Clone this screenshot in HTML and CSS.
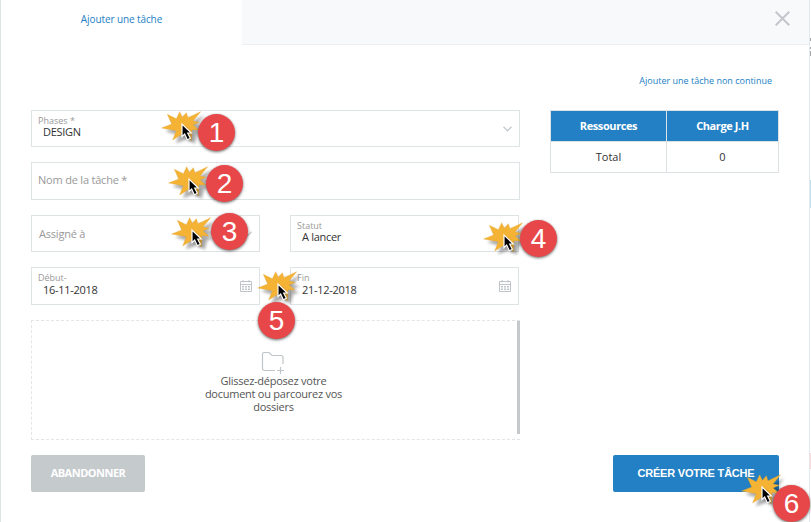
FILE: index.html
```
<!DOCTYPE html>
<html lang="fr">
<head>
<meta charset="utf-8">
<title>Ajouter une tâche</title>
<link rel="stylesheet" href="styles.css">
</head>
<body>
<svg class="defs" width="0" height="0" aria-hidden="true">
  <defs>
    <symbol id="click" viewBox="-66 -42 138 108">
      <path class="burst-shade" d="M-50 22L-22 10L-33 -16L-10 -4L3 -26L12 -8L23 -23L28 -7L66 -26L46 2L66 7L46 15L62 28L46 30L38 60L18 45L-18 58L-10 34Z"/>
      <path class="burst" d="M-61 12L-31 0L-44 -29L-17 -16L-7 -37L1 -20L13 -34L18 -19L56 -37L33 -9L52 -5L33 3L51 18L30 17L28 50L4 28L-28 48L-17 20Z"/>
      <path class="pointer-shade" d="M6 6V44L14 37L21 54L31 50L23 34H34Z"/>
      <path class="pointer" d="M0 0V38L8 30L16 47L25 43L17 27H28Z"/>
    </symbol>
    <symbol id="calendar" viewBox="0 0 12 12">
      <path d="M.5 1.500h11v10H.5zM.5 4.500h11M3 0v2.500M9 0v2.500"/>
      <path class="days" d="M2 6.500h8M2 8h8M2 9.500h8"/>
    </symbol>
  </defs>
</svg>

<main class="dialog">
  <header class="tabs">
    <div class="tab">Ajouter une tâche</div>
    <svg class="close" viewBox="0 0 15 15"><path d="M.7.7l13.6 13.6M14.3.7L.7 14.3"/></svg>
  </header>
  <div class="content">
    <form class="form">
      <div class="field select">
        <span class="label">Phases *</span><span class="value">DESIGN</span>
        <svg class="chevron" viewBox="0 0 9 6"><path d="M.5.8l4 4 4-4"/></svg>
      </div>
      <div class="field tall empty"><span class="placeholder">Nom de la tâche *</span></div>
      <div class="row">
        <div class="field empty">
          <span class="placeholder assigned">Assigné à</span>
          <svg class="chevron" viewBox="0 0 9 6"><path d="M.5.8l4 4 4-4"/></svg>
        </div>
        <div class="field"><span class="label">Statut</span><span class="value">A lancer</span></div>
      </div>
      <div class="row">
        <div class="field tall"><span class="label">Début-</span><span class="value">16-11-2018</span><svg class="cal"><use href="#calendar"/></svg></div>
        <div class="field tall"><span class="label">Fin</span><span class="value">21-12-2018</span><svg class="cal"><use href="#calendar"/></svg></div>
      </div>
      <div class="drop">
        <svg class="folder" viewBox="0 0 24 23"><path d="M14 19.500H3.500a2 2 0 0 1-2-2v-14q0-2 2-2h4.500l3 3h9q2 0 2 2V13M19.500 16v7M16 19.500h7"/></svg>
        <p>Glissez-déposez votre<br>document ou parcourez vos<br>dossiers</p>
      </div>
    </form>
    <aside class="side">
      <a class="extra">Ajouter une tâche non continue</a>
      <table>
        <tr><th class="first">Ressources</th><th>Charge J.H</th></tr>
        <tr><td>Total</td><td>0</td></tr>
      </table>
    </aside>
  </div>
  <footer class="actions">
    <button class="cancel">ABANDONNER</button>
    <button class="create">CRÉER VOTRE TÂCHE</button>
  </footer>
</main>
<div class="backdrop"></div>

<svg class="burst-mark m1"><use href="#click"/></svg><div class="badge b1">1</div>
<svg class="burst-mark m2"><use href="#click"/></svg><div class="badge b2">2</div>
<svg class="burst-mark m3"><use href="#click"/></svg><div class="badge b3">3</div>
<svg class="burst-mark m4"><use href="#click"/></svg><div class="badge b4">4</div>
<svg class="burst-mark m5"><use href="#click"/></svg><div class="badge b5">5</div>
<svg class="burst-mark m6"><use href="#click"/></svg><div class="badge b6">6</div>
</body>
</html>
```
FILE: styles.css
```
* { box-sizing: border-box; }
body {
  margin: 0;
  width: 811px;
  height: 522px;
  overflow: hidden;
  display: flex;
  position: relative;
  background: #fff;
  font-family: "Open Sans", sans-serif;
  color: #333;
}
.defs { position: absolute; }
.dialog {
  width: 810px;
  height: 522px;
  border-left: 1px solid #dfe5e7;
  border-right: 1px solid #e3e8ec;
}
.backdrop {
  width: 1px;
  background: linear-gradient(#fff 38px, #aaa 38px 41px, #fff 41px 47px, #aaa 47px 49px, #fff 49px 51px, #aaa 51px 56px, #fff 56px 180px, #bfe0ee 180px 208px, #fff 208px 453px, #fadada 453px 469px, #fff 469px);
}
.tabs {
  display: flex;
  justify-content: space-between;
  height: 45px;
  background: linear-gradient(#f8f9fb 44px, #eceff2 44px);
}
.tab {
  width: 241px;
  background: #fff;
  color: #2180c4;
  font-size: 10px;
  line-height: 39px;
  letter-spacing: -.1px;
  text-align: center;
}
.close {
  width: 15px;
  height: 15px;
  margin: 11px 19px 0 0;
  fill: none;
  stroke: #c3c7cb;
  stroke-width: 2;
}
.content {
  display: flex;
  gap: 30px;
  height: 395px;
  padding: 0 30px;
}
.form {
  display: flex;
  flex-direction: column;
  gap: 15px;
  width: 489px;
  padding-top: 65px;
}
.row { display: flex; gap: 30px; }
.row .field { width: 229px; }
.field {
  position: relative;
  display: flex;
  flex-direction: column;
  height: 37px;
  padding: 4px 6px 0;
  border: 1px solid #dee4e6;
}
.field.tall { height: 38px; }
.label { font-size: 9px; line-height: 11px; color: #999; }
.value { font-size: 11px; line-height: 12px; padding-left: 5px; letter-spacing: -.3px; }
.tall .value { padding-top: 1px; letter-spacing: -.3px; }
.field.empty { justify-content: center; padding-top: 0; }
.placeholder { font-size: 11px; line-height: 14px; padding-bottom: 2px; letter-spacing: -.2px; color: #999; }
.assigned { padding: 1px 0 0 1px; }
.chevron {
  position: absolute;
  right: 7px;
  top: 15px;
  width: 9px;
  height: 6px;
  fill: none;
  stroke: #c5c9cc;
  stroke-width: 1.3;
}
.cal {
  position: absolute;
  right: 7px;
  top: 12px;
  width: 12px;
  height: 12px;
  fill: none;
  stroke: #bfc4c8;
  stroke-width: 1;
}
.days { stroke-dasharray: 2 1; stroke-width: 1; }
.drop {
  display: flex;
  flex-direction: column;
  align-items: center;
  height: 120px;
  padding: 30px 5px 0 0;
  border: 1px dashed #e3e6e8;
  border-right: 0;
  background: linear-gradient(#c5c9cc, #c5c9cc) right top / 3px 113px no-repeat;
}
.folder { width: 24px; height: 23px; margin-right: 2px; fill: none; stroke: #c0c5c9; stroke-width: 1.2; }
.drop p { margin: 0; font-size: 11px; line-height: 13px; letter-spacing: -.25px; text-align: center; color: #555; }
.side { width: 229px; }
.extra {
  display: block;
  height: 65px;
  padding: 29px 7px 0 0;
  font-size: 9px;
  line-height: 14px;
  text-align: right;
  color: #2180c4;
}
table { width: 229px; border-collapse: collapse; table-layout: fixed; font-size: 11px; }
th, td { height: 31px; padding: 0 0 2px; border: 1px solid #dce1e4; text-align: center; }
th { background: #2380c4; color: #fff; letter-spacing: -.4px; }
.first { width: 116px; }
.actions { display: flex; justify-content: space-between; padding: 15px 30px 0; }
button {
  height: 37px;
  padding: 0 0 2px;
  border: 0;
  border-radius: 2px;
  color: #fff;
  font: bold 11px "Open Sans", sans-serif;
}
.cancel { width: 114px; background: #c5cacd; letter-spacing: -.5px; }
.create { width: 166px; background: #2380c4; font-family: "Liberation Sans", sans-serif; letter-spacing: -.2px; }
.burst-mark { position: absolute; width: 46px; height: 36px; }
.burst { fill: #f5b335; stroke: #dfa02e; stroke-width: 1; }
.burst-shade, .pointer-shade { fill: #000; opacity: .32; filter: blur(4px); }
.pointer { fill: #000; stroke: #fff; stroke-width: 3.500; }
.badge {
  position: absolute;
  width: 37px;
  height: 37px;
  border-radius: 50%;
  background: #e8474a;
  box-shadow: 0 1px 3px rgba(0, 0, 0, .6);
  color: #fff;
  font: 28px/37px "Liberation Sans", sans-serif;
  text-align: center;
}
.m1 { left: 160px; top: 110px; }
.m2 { left: 167px; top: 165px; }
.m3 { left: 170px; top: 216px; }
.m4 { left: 482px; top: 221px; }
.m5 { left: 256px; top: 270px; }
.m6 { left: 740px; top: 473px; }
.b1 { left: 198px; top: 114px; }
.b2 { left: 206px; top: 165px; }
.b3 { left: 211px; top: 213px; }
.b4 { left: 520px; top: 220px; }
.b5 { left: 258px; top: 302px; }
.b6 { left: 773px; top: 485px; }
```
